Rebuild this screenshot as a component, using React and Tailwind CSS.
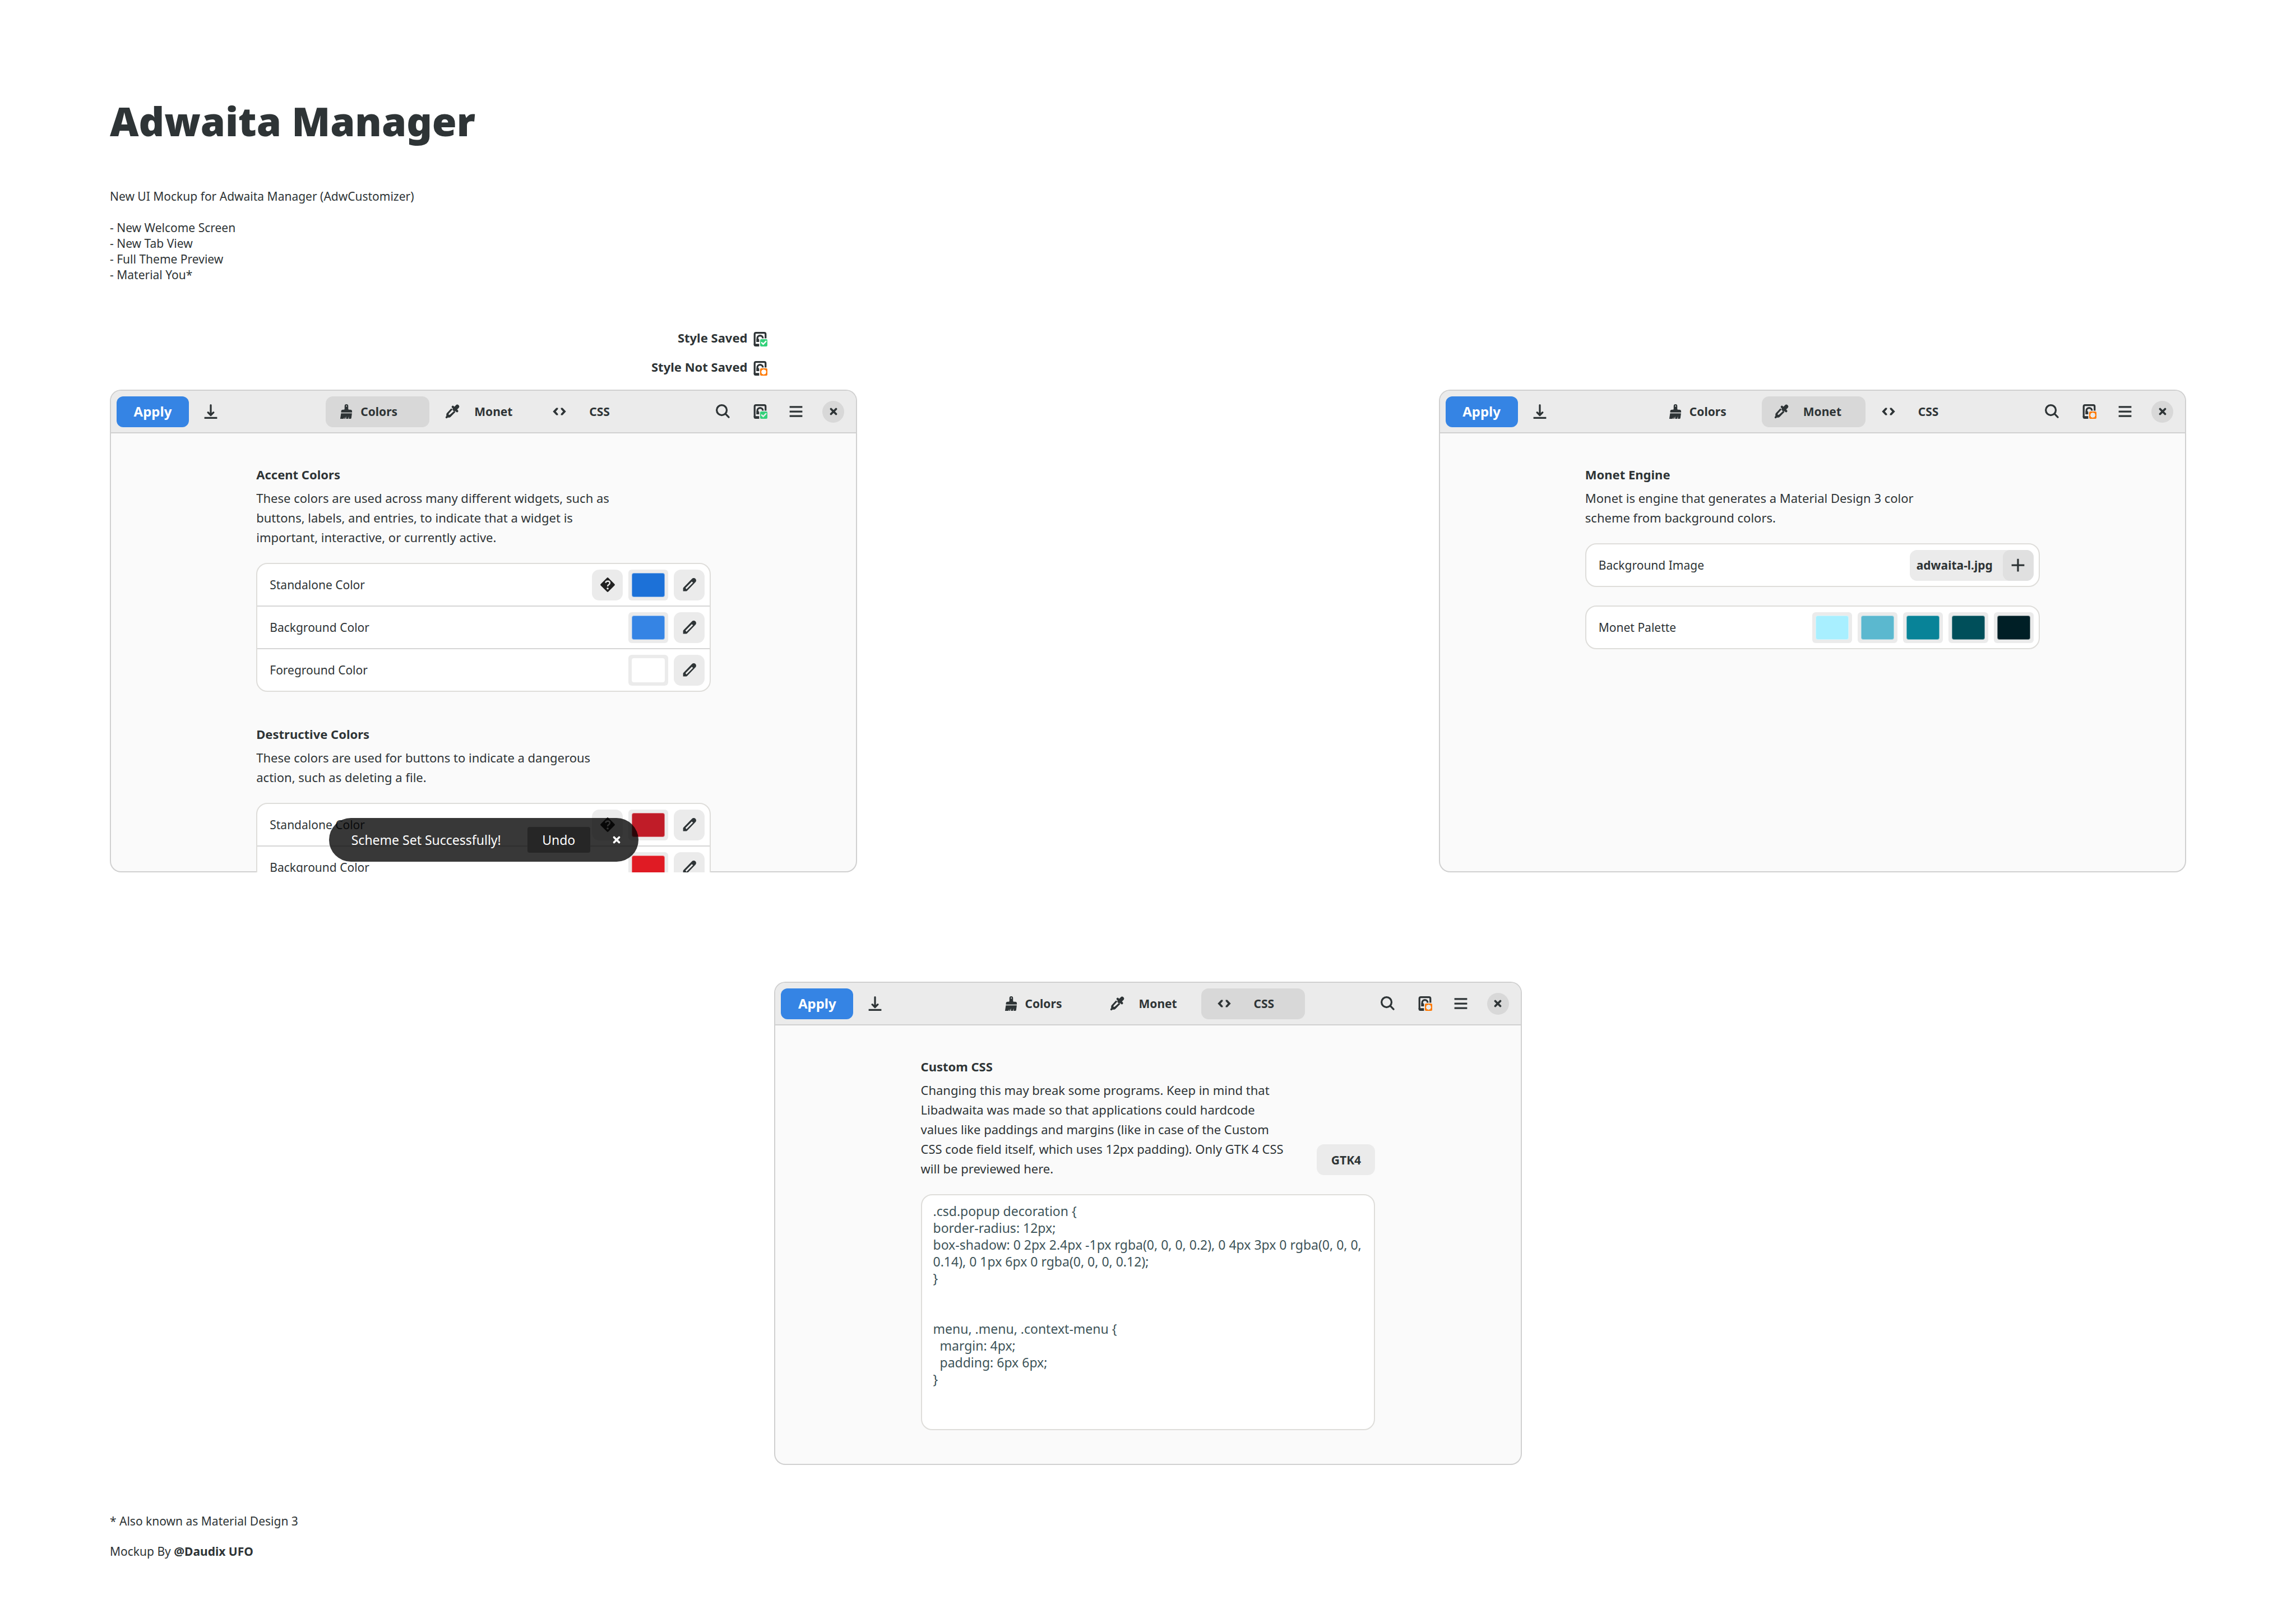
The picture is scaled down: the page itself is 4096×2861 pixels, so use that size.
function Icon({ children, className = "" }) {
  return (
    <svg viewBox="0 0 16 16" aria-hidden="true" className={"size-[26px] shrink-0 overflow-visible fill-current " + className}>
      {children}
    </svg>
  );
}

function Strokes({ d, width = 2 }) {
  return <path d={d} fill="none" stroke="currentColor" strokeWidth={width} strokeLinecap="round" strokeLinejoin="round" />;
}

const DownloadIcon = () => (
  <Icon>
    <Strokes d="M8 1v11M5 9l3 3 3-3" />
    <path d="M1 14h14v2H1z" />
  </Icon>
);

const BrushIcon = () => (
  <Icon>
    <path
      fillRule="evenodd"
      d="M8 0a2 2 0 0 0-2 2v3q0 1-1 1h-.8a2 2 0 0 0-2 2v1h12V8a2 2 0 0 0-2-2H11q-1 0-1-1V2a2 2 0 0 0-2-2zm.1 1.4a.6.6 0 1 1 0 1.3.6.6 0 0 1 0-1.3z"
    />
    <path d="M2.1 10h12l-.7 5.2q-.2.8-1 .8h-1.7l-.1-2.7-.7 2.7H7.7l-.1-2.7-1 2.7h-.9l.1-1.8-.9 1.8H1.2z" />
  </Icon>
);

const DropperIcon = () => (
  <Icon>
    <Strokes d="M13.4 2.6l-2.9 2.9" width={4.2} />
    <Strokes d="M8.5 2.9l4.7 4.7" width={2.6} />
    <path
      fillRule="evenodd"
      d="M6.7 4.6L1.9 9.9q-.5.6-.5 1.4v1.8q-.9.5-.9 1.3 0 1 1.1 1.1.8 0 1.3-.9h1.7q.8 0 1.4-.6l5.4-5.5zM8 6l1.6 1.7-4.2 3.7q-.5.4-1.5.2-.1-1 .3-1.5z"
    />
  </Icon>
);

const CodeIcon = () => (
  <Icon>
    <path d="M4.6 4H6.4V5.4L4 8l2.4 2.6V12H4.6L.8 8zM11.4 4H9.6V5.4L12 8l-2.4 2.6V12h1.8l3.8-4z" />
  </Icon>
);

const SearchIcon = () => (
  <Icon>
    <circle cx="6.5" cy="6.5" r="5.5" fill="none" stroke="currentColor" strokeWidth="2" />
    <Strokes d="M10.6 10.6l3.6 3.6" />
  </Icon>
);

const MenuIcon = () => (
  <Icon>
    <path d="M1 2h14v2H1zM1 7h14v2H1zM1 12h14v2H1z" />
  </Icon>
);

const CloseIcon = () => (
  <Icon>
    <Strokes d="M5.2 5.2l5.6 5.6M10.8 5.2l-5.6 5.6" width={2.3} />
  </Icon>
);

const PlusIcon = () => (
  <Icon>
    <path d="M7 1h2v6h6v2H9v6H7V9H1V7h6z" />
  </Icon>
);

const PencilIcon = () => (
  <Icon>
    <path
      fillRule="evenodd"
      d="M1 15v-3.2q0-.4.4-.8l9.4-9.6a2.6 2.6 0 0 1 3.8 3.7L5.4 14.6q-.4.4-.9.4zM3.6 11.6l1.1 1.3L11.9 5.7 10.6 4.4z"
    />
  </Icon>
);

const HelpIcon = () => (
  <Icon className="text-[#222222]">
    <path d="M7.2.4q.8-.8 1.6 0l6.8 6.8q.8.8 0 1.6l-6.8 6.8q-.8.8-1.6 0L.4 8.8q-.8-.8 0-1.6z" />
    <path d="M5.8 5.9Q6 4 8.2 4q2.2.1 2.2 2 0 1.200-1.2 1.900Q8 8.500 8 9.800" fill="none" stroke="#ebebeb" strokeWidth="1.5" />
    <circle cx="8" cy="12.1" r="1.100" fill="#ebebeb" />
  </Icon>
);

function StyleIcon({ saved, onWhite }) {
  const cut = onWhite ? "stroke-white" : "stroke-[#ebebeb]";
  return (
    <Icon>
      <path d="M14 7V2.500Q14 1 12.500 1h-9Q2 1 2 2.500V14" fill="none" stroke="currentColor" strokeWidth="2" />
      <path d="M1 13h6v3H3q-2 0-2-2z" />
      <path d="M5 11V7a3 3 0 0 1 6 0" fill="none" stroke="currentColor" strokeWidth="2" />
      <path d="M4 7.500h2.200L7 8.500V11H4z" />
      <rect x="8" y="8" width="8" height="8" rx="1.200" className={saved ? "fill-[#33d17a]" : "fill-[#ff7800]"} />
      {saved ? (
        <path d="M9.700 11.800l1.700 1.600 3-3" fill="none" strokeWidth="1.500" strokeLinecap="round" className={cut} />
      ) : (
        <path
          d="M12 9.900v4.200M9.900 12h4.200M10.500 10.500l3 3M13.500 10.500l-3 3"
          fill="none"
          strokeWidth="1.700"
          strokeLinecap="round"
          className={cut}
        />
      )}
    </Icon>
  );
}

const tabs = [
  { name: "Colors", icon: <BrushIcon />, spacing: "gap-3 pl-6" },
  { name: "Monet", icon: <DropperIcon />, spacing: "ml-1.5 gap-[26px] pl-[22px]" },
  { name: "CSS", icon: <CodeIcon />, spacing: "gap-10 pl-7" },
];

function Window({ active, saved, children }) {
  return (
    <section
      aria-label={active}
      className="relative flex aspect-[1333/861] w-[36%] flex-col overflow-hidden rounded-[20px] bg-[#fafafa] p-0.5 shadow-[inset_0_0_0_2px_#d0d0d0]"
    >
      <header className="grid h-[76px] shrink-0 grid-cols-[1fr_auto_1fr] items-center rounded-t-[18px] border-b-2 border-[#d0d0d0] bg-[#ebebeb] pr-3 pl-2.5">
        <div className="flex items-center">
          <button className="h-[55px] w-[129px] rounded-xl bg-[#3584e4] text-2xl font-bold text-white">Apply</button>
          <button aria-label="Download" className="ml-[26px]">
            <DownloadIcon />
          </button>
        </div>
        <div role="tablist" className="flex">
          {tabs.map((t) => (
            <button
              key={t.name}
              role="tab"
              aria-selected={t.name === active}
              className={
                "flex h-[55px] w-[185px] items-center rounded-[13px] text-[21px] font-bold " +
                t.spacing +
                (t.name === active ? " bg-[#d8d8d8]" : "")
              }
            >
              {t.icon}
              {t.name}
            </button>
          ))}
        </div>
        <div className="mr-[9px] flex items-center justify-end">
          <button aria-label="Search">
            <SearchIcon />
          </button>
          <button aria-label={saved ? "Style saved" : "Style not saved"} className="ml-10">
            <StyleIcon saved={saved} />
          </button>
          <button aria-label="Menu" className="ml-[38px]">
            <MenuIcon />
          </button>
          <button aria-label="Close" className="ml-[34px] flex size-[39px] items-center justify-center rounded-full bg-[#d8d8d8]">
            <CloseIcon />
          </button>
        </div>
      </header>
      <div className="mx-auto flex w-[61%] grow flex-col pt-[59px]">{children}</div>
    </section>
  );
}

function Intro({ title, lines, children }) {
  return (
    <div className="mb-7 flex shrink-0 items-end justify-between whitespace-nowrap">
      <div>
        <h2 className="text-[22px] leading-7 font-bold">{title}</h2>
        <p className="mt-[11px] text-[22px] leading-[35px]">
          {lines.map((l) => (
            <span key={l} className="block">
              {l}
            </span>
          ))}
        </p>
      </div>
      {children}
    </div>
  );
}

function List({ children }) {
  return (
    <div className="shrink-0 divide-y-2 divide-[#d6d6d6] rounded-[20px] border-2 border-[#deddda] bg-white">{children}</div>
  );
}

function Row({ label, children }) {
  return (
    <div className="flex items-center justify-between pr-[9px] pl-[22px]">
      <span className="text-[21px]">{label}</span>
      <div className="flex h-[74px] items-center gap-2.5">{children}</div>
    </div>
  );
}

function Swatch({ label, color }) {
  return (
    <input
      type="color"
      aria-label={label}
      defaultValue={color}
      className="h-[55px] w-[71px] appearance-none rounded-md bg-[#ebebeb] p-1.5 [&::-webkit-color-swatch]:rounded-[4px] [&::-webkit-color-swatch]:border [&::-webkit-color-swatch]:border-white/40 [&::-webkit-color-swatch-wrapper]:p-0"
    />
  );
}

const squareButton = "flex size-[55px] items-center justify-center rounded-[13px] bg-[#ebebeb]";

function ColorRow({ label, color, help }) {
  return (
    <Row label={label}>
      {help && (
        <button aria-label={"About " + label} className={squareButton}>
          <HelpIcon />
        </button>
      )}
      <Swatch label={label} color={color} />
      <button aria-label={"Edit " + label} className={squareButton}>
        <PencilIcon />
      </button>
    </Row>
  );
}

const code = `.csd.popup decoration {
border-radius: 12px;
box-shadow: 0 2px 2.4px -1px rgba(0, 0, 0, 0.2), 0 4px 3px 0 rgba(0, 0, 0, 0.14), 0 1px 6px 0 rgba(0, 0, 0, 0.12);
}


menu, .menu, .context-menu {
  margin: 4px;
  padding: 6px 6px;
}`;

const palette = ["#a8efff", "#5bb8cf", "#088398", "#004f5a", "#001f26"];

export default function App() {
  return (
    <main className="min-h-screen bg-white px-[196px] pt-44 pb-20 font-['Noto_Sans',sans-serif] text-[21px] leading-7 text-[#2e3436]">
      <h1 className="text-[71px] leading-[80px] font-black">Adwaita Manager</h1>
      <p className="mt-20">New UI Mockup for Adwaita Manager (AdwCustomizer)</p>
      <ul className="mt-7">
        <li>- New Welcome Screen</li>
        <li>- New Tab View</li>
        <li>- Full Theme Preview</li>
        <li>- Material You*</li>
      </ul>

      <div className="mt-[88px] mb-[25px] flex w-[36%] flex-col items-end gap-[26px] pr-40 text-[22px] leading-5 font-bold">
        <div className="flex items-start gap-2.5">
          Style Saved <StyleIcon saved onWhite />
        </div>
        <div className="flex items-start gap-2.5">
          Style Not Saved <StyleIcon onWhite />
        </div>
      </div>

      <div className="flex items-start justify-between">
        <Window active="Colors" saved>
          <Intro
            title="Accent Colors"
            lines={[
              "These colors are used across many different widgets, such as",
              "buttons, labels, and entries, to indicate that a widget is",
              "important, interactive, or currently active.",
            ]}
          />
          <List>
            <ColorRow label="Standalone Color" color="#1c71d8" help />
            <ColorRow label="Background Color" color="#3584e4" />
            <ColorRow label="Foreground Color" color="#ffffff" />
          </List>
          <div className="h-[61px] shrink-0" />
          <Intro
            title="Destructive Colors"
            lines={["These colors are used for buttons to indicate a dangerous", "action, such as deleting a file."]}
          />
          <List>
            <ColorRow label="Standalone Color" color="#c01c28" help />
            <ColorRow label="Background Color" color="#e01b24" />
          </List>
          <div
            role="status"
            className="absolute bottom-[19px] left-1/2 flex h-[78px] w-[552px] -translate-x-1/2 items-center justify-between rounded-full bg-black/78 pr-[26px] pl-10 text-[23px] text-white"
          >
            Scheme Set Successfully!
            <div className="flex items-center gap-[34px]">
              <button className="h-[46px] w-28 rounded-[4px] bg-[#262626]">Undo</button>
              <button aria-label="Dismiss">
                <CloseIcon />
              </button>
            </div>
          </div>
        </Window>

        <Window active="Monet">
          <Intro
            title="Monet Engine"
            lines={["Monet is engine that generates a Material Design 3 color", "scheme from background colors."]}
          />
          <List>
            <Row label="Background Image">
              <div className="flex h-[55px] w-[221px] items-center justify-between rounded-[13px] bg-[#ebebeb] pl-3 font-bold">
                adwaita-l.jpg
                <button
                  aria-label="Choose background image"
                  className="flex size-[55px] items-center justify-center rounded-[13px] bg-[#e0e0e0]"
                >
                  <PlusIcon />
                </button>
              </div>
            </Row>
          </List>
          <div className="h-[33px] shrink-0" />
          <List>
            <Row label="Monet Palette">
              {palette.map((c, i) => (
                <Swatch key={c} label={"Palette color " + (i + 1)} color={c} />
              ))}
            </Row>
          </List>
        </Window>
      </div>

      <div className="mt-[195px] flex justify-center">
        <Window active="CSS">
          <Intro
            title="Custom CSS"
            lines={[
              "Changing this may break some programs. Keep in mind that",
              "Libadwaita was made so that applications could hardcode",
              "values like paddings and margins (like in case of the Custom",
              "CSS code field itself, which uses 12px padding). Only GTK 4 CSS",
              "will be previewed here.",
            ]}
          >
            <button className="mb-1.5 h-[55px] w-[104px] rounded-[13px] bg-[#ebebeb] text-[21px] font-bold">GTK4</button>
          </Intro>
          <textarea
            aria-label="Custom CSS"
            spellCheck={false}
            defaultValue={code}
            className="h-[421px] shrink-0 resize-none overflow-hidden rounded-[20px] border-2 border-[#deddda] bg-white pt-[13px] pr-2 pl-5 text-[23px] leading-[30px] text-[#3d5358]"
          />
        </Window>
      </div>

      <footer className="mt-[86px]">
        <p>* Also known as Material Design 3</p>
        <p className="mt-[26px]">
          Mockup By <a href="#daudix" className="font-bold">@Daudix UFO</a>
        </p>
      </footer>
    </main>
  );
}
